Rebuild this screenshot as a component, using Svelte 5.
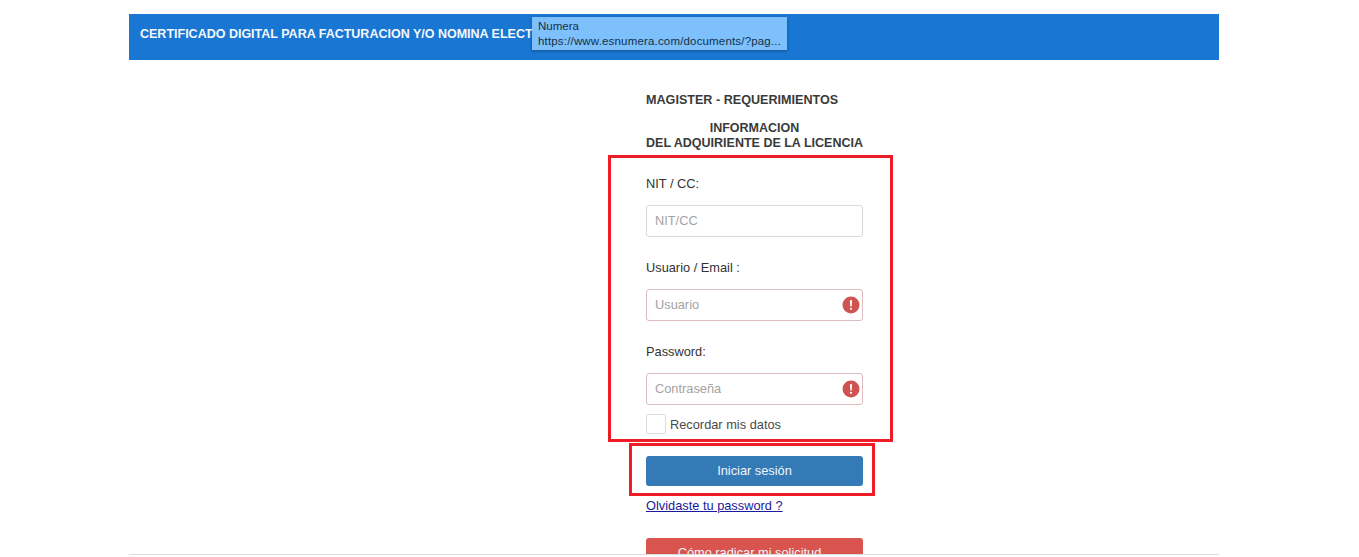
<script>
	const fields = [
		{ label: 'NIT / CC:', placeholder: 'NIT/CC', invalid: false },
		{ label: 'Usuario / Email :', placeholder: 'Usuario', invalid: true },
		{ label: 'Password:', placeholder: 'Contraseña', invalid: true }
	];
</script>

<div class="page">
	<div class="container">
		<header class="banner">CERTIFICADO DIGITAL PARA FACTURACION Y/O NOMINA ELECTRONICA</header>
		<div class="tooltip">
			<span>Numera</span>
			<span class="url">https://www.esnumera.com/documents/?pag...</span>
		</div>

		<main class="form">
			<h2 class="title">MAGISTER - REQUERIMIENTOS</h2>
			<h2 class="subtitle">INFORMACION<br />DEL ADQUIRIENTE DE LA LICENCIA</h2>

			<div class="box">
				{#each fields as field}
					<div class="field">
						<label for={field.placeholder}>{field.label}</label>
						<div class="input" class:invalid={field.invalid}>
							<input id={field.placeholder} type="text" placeholder={field.placeholder} />
							{#if field.invalid}
								<svg class="alert" width="18" height="18" viewBox="0 0 18 18" aria-hidden="true">
									<circle cx="9" cy="9" r="8.5" fill="#cf5450" />
									<path d="M7.9 4.2h2.2l-.4 6.3H8.3z" fill="#fff" />
									<circle cx="9" cy="12.8" r="1.1" fill="#fff" />
								</svg>
							{/if}
						</div>
					</div>
				{/each}
				<label class="remember">
					<span class="check"></span>
					Recordar mis datos
				</label>
			</div>

			<div class="submit-box">
				<button class="btn primary" type="button">Iniciar sesión</button>
			</div>
			<a class="forgot" href="#top">Olvidaste tu password ?</a>
			<button class="btn danger" type="button">Cómo radicar mi solicitud</button>
		</main>

		<div class="footer-line"></div>
	</div>
</div>

<style>
	:global(body) {
		background: #fff;
		overflow: hidden;
	}
	.page {
		height: 557px;
		overflow: hidden;
		font-family: "Liberation Sans", Arial, sans-serif;
		font-size: 13px;
		color: #333;
	}
	.container {
		position: relative;
		width: 1090px;
		height: 557px;
		margin-left: 129px;
		padding-top: 14px;
		box-sizing: border-box;
		overflow: hidden;
	}
	.banner {
		height: 46px;
		padding-left: 11px;
		box-sizing: border-box;
		background: #1976d2;
		color: #f4f8fc;
		font-size: 12.5px;
		font-weight: bold;
		line-height: 40px;
		white-space: nowrap;
	}
	.tooltip {
		position: absolute;
		left: 403px;
		top: 17px;
		width: 255px;
		height: 33px;
		padding: 2px 6px;
		box-sizing: border-box;
		display: flex;
		flex-direction: column;
		background: #7dc0fb;
		box-shadow: 0 1px 3px rgba(0, 0, 0, 0.3);
		color: #14304a;
		font-size: 11.5px;
		line-height: 15px;
		white-space: nowrap;
	}
	.url {
		letter-spacing: 0.17px;
	}
	.form {
		width: 217px;
		margin-left: 517px;
	}
	.title,
	.subtitle {
		margin: 0;
		font-size: 12.5px;
		font-weight: bold;
		color: #3a3a3a;
		line-height: 15px;
		white-space: nowrap;
	}
	.title {
		margin-top: 33px;
		font-size: 12.6px;
	}
	.subtitle {
		margin-top: 13px;
		text-align: center;
	}
	.box {
		position: relative;
		margin-top: 4px;
		padding-top: 19px;
		height: 284px;
		box-sizing: border-box;
	}
	.box::before {
		content: "";
		position: absolute;
		left: -38px;
		right: -30px;
		top: 0;
		bottom: -3px;
		border: 3px solid #ee1c25;
		pointer-events: none;
	}
	.field {
		height: 84px;
	}
	.field label {
		display: block;
		height: 19px;
		line-height: 19px;
		font-size: 12.8px;
		color: #333;
	}
	.input {
		position: relative;
		margin-top: 12px;
		height: 32px;
	}
	.input input {
		display: block;
		width: 100%;
		height: 32px;
		padding: 0 8px 2px;
		box-sizing: border-box;
		border: 1px solid #d9d9d9;
		border-radius: 3px;
		background: #fff;
		font: inherit;
		font-size: 12.8px;
		color: #333;
		outline: none;
	}
	.input.invalid input {
		border-color: #dcbcbc;
	}
	.input input::placeholder {
		color: #a3a3a3;
		opacity: 1;
	}
	.alert {
		position: absolute;
		right: 3px;
		top: 7px;
	}
	.remember {
		display: flex;
		align-items: center;
		gap: 4px;
		margin-top: -12px;
		height: 20px;
		color: #4a4a4a;
		font-size: 12.8px;
	}
	.check {
		width: 18px;
		height: 18px;
		border: 1px solid #ddd;
		border-radius: 2px;
		background: #fff;
	}
	.submit-box {
		position: relative;
		margin-top: 17px;
	}
	.submit-box::before {
		content: "";
		position: absolute;
		left: -17px;
		right: -12px;
		top: -13px;
		bottom: -10px;
		border: 3px solid #ee1c25;
		pointer-events: none;
	}
	.btn {
		display: block;
		width: 100%;
		height: 30px;
		padding: 0 0 2px;
		border: 0;
		border-radius: 3px;
		font: inherit;
		font-size: 12.8px;
		color: #f0f5fa;
		text-align: center;
	}
	.primary {
		background: #337ab7;
	}
	.danger {
		margin-top: 24px;
		padding-right: 10px;
		background: #d9534f;
	}
	.forgot {
		display: block;
		margin-top: 12px;
		height: 16px;
		line-height: 16px;
		color: #1a1a9c;
		font-size: 12.8px;
		text-decoration: underline;
	}
	.footer-line {
		position: absolute;
		left: 0;
		right: 0;
		bottom: 0;
		height: 2px;
		background: #fff;
		border-top: 1px solid #ddd;
	}
</style>
